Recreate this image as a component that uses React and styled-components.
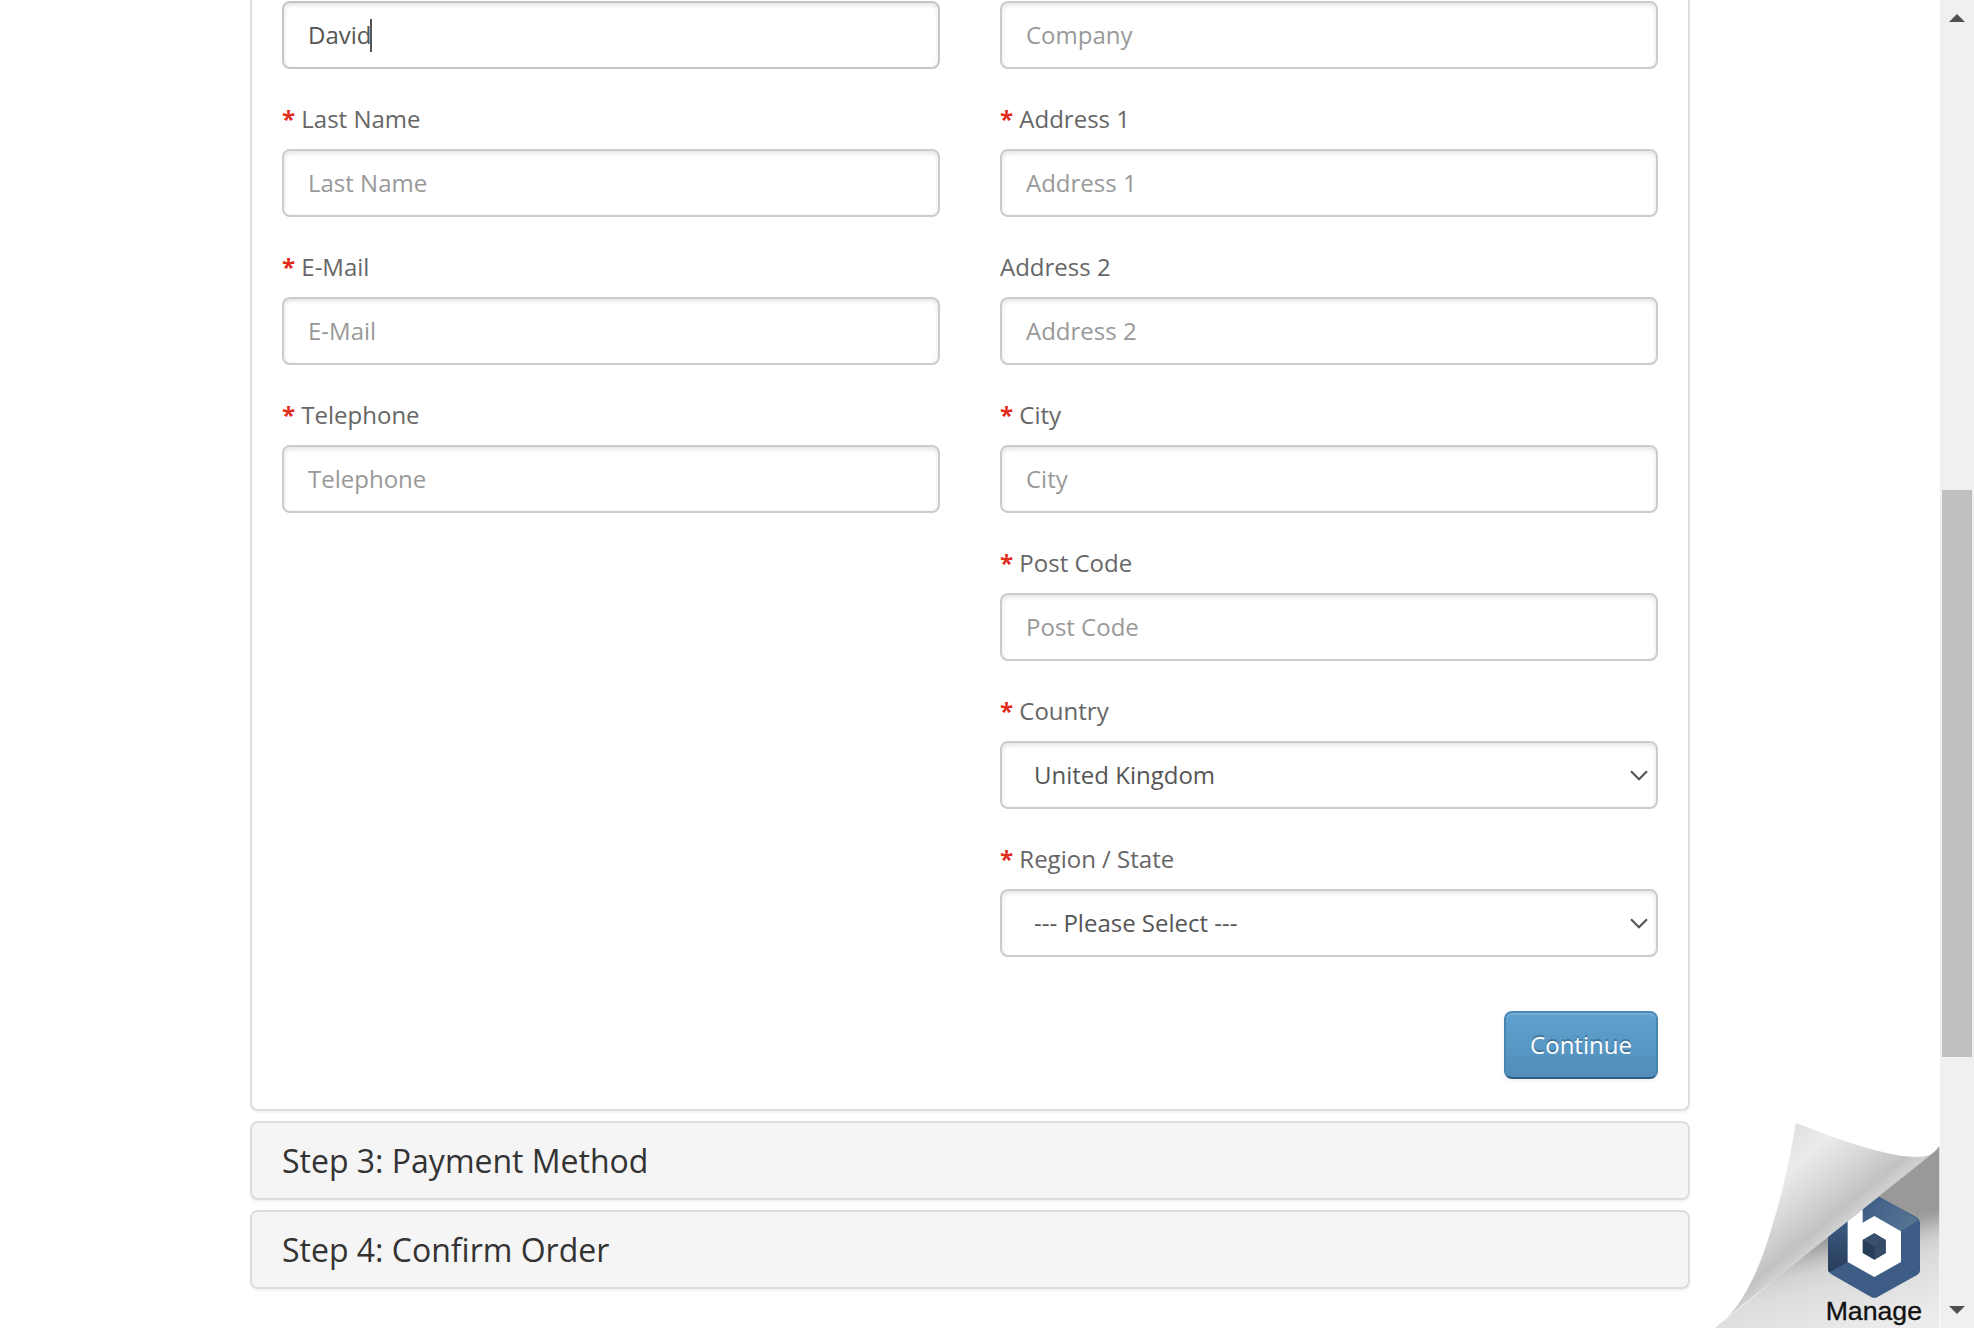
import React from "react";
import styled, { createGlobalStyle } from "styled-components";

const GlobalStyle = createGlobalStyle`
  * { box-sizing: border-box; }
  html, body { margin: 0; padding: 0; background: #fff; overflow: hidden; }
  body, input, button { font-family: "Open Sans", "Noto Sans", sans-serif; }
`;

const Window = styled.div`
  position: relative;
  display: flex;
  width: 1974px;
  height: 1328px;
  overflow: hidden;
  background: #fff;
`;

const Page = styled.main`
  flex: 1;
  display: flex;
  flex-direction: column;
  align-items: center;
  gap: 10px;
`;

const Panel = styled.section`
  width: 1440px;
  flex: none;
  border: 2px solid #ddd;
  border-radius: 8px;
  box-shadow: 0 2px 2px rgba(0, 0, 0, 0.05);
  background: #fff;
`;

const OpenPanel = styled(Panel)`
  height: 1111px;
  border-top: 0;
  border-top-left-radius: 0;
  border-top-right-radius: 0;
  padding: 1px 30px 30px;
  display: flex;
  flex-direction: column;
`;

const StepPanel = styled(Panel)`
  height: 79px;
  padding: 0 30px;
  display: flex;
  align-items: center;
  background: #f5f5f5;
`;

const StepTitle = styled.h4`
  margin: 0;
  font-size: 32px;
  font-weight: 400;
  line-height: 35px;
  color: #333;
`;

const Columns = styled.div`
  display: grid;
  grid-template-columns: 658px 658px;
  column-gap: 60px;
  align-items: start;
`;

const Fieldset = styled.div`
  display: flex;
  flex-direction: column;
  gap: 30px;
`;

const Group = styled.div`
  display: flex;
  flex-direction: column;
  gap: 10px;
`;

const Label = styled.label`
  height: 40px;
  font-size: 24px;
  line-height: 40px;
  color: #666;
  white-space: pre;
`;

const Required = styled.span`
  color: #e32c1b;
  font-weight: 700;
`;

const Control = styled.div`
  display: flex;
  align-items: center;
  justify-content: space-between;
  height: 68px;
  padding: ${(p) => (p.$select ? "0 7px 0 32px" : "0 24px")};
  border: 2px solid ${(p) => (p.$focused ? "#c1c8cc" : "#ccc")};
  border-radius: 8px;
  background: #fff;
  box-shadow: inset 0 2px 4px rgba(0, 0, 0, 0.12);
  font-size: 24px;
  line-height: 40px;
  color: #555;
`;

const TextInput = styled.input`
  width: 100%;
  height: 38px;
  margin: 0 0 2px;
  border: 0;
  padding: 0;
  outline: 0;
  background: transparent;
  font-size: 24px;
  color: #555;
  &::placeholder { color: #999; opacity: 1; }
`;

const Typed = styled.span`
  display: inline-flex;
  align-items: center;
`;

const Caret = styled.span`
  width: 2px;
  height: 33px;
  margin-left: -1px;
  background: #555;
`;

const Actions = styled.div`
  display: flex;
  justify-content: flex-end;
  margin-top: auto;
`;

const Button = styled.button`
  width: 154px;
  height: 68px;
  padding: 0;
  border: 2px solid;
  border-color: #4c8ab5 #4886b0 #2f5f80;
  border-radius: 8px;
  background: linear-gradient(#5ea1cf, #528eb9);
  box-shadow: inset 0 2px 0 rgba(255, 255, 255, 0.15), 0 2px 4px rgba(0, 0, 0, 0.06);
  color: #fff;
  font-size: 24px;
  line-height: 40px;
  text-shadow: 0 -2px 0 rgba(0, 0, 0, 0.25);
`;

const Scrollbar = styled.aside`
  width: 34px;
  height: 1328px;
  padding: 14px 2px;
  display: flex;
  flex-direction: column;
  align-items: center;
  background: #f0f0f0;
`;

const Thumb = styled.div`
  width: 30px;
  height: 567px;
  margin-top: 468px;
  margin-bottom: auto;
  background: #c0c0c0;
`;

const ManageCurl = styled.svg`
  position: absolute;
  right: 34px;
  bottom: 0;
`;

const Chevron = () => (
  <svg width="20" height="20" viewBox="0 0 20 20" fill="none">
    <path d="M2 6.2 10 14.2 18 6.2" stroke="#555" strokeWidth="2.2" />
  </svg>
);

const Arrow = ({ down }) => (
  <svg width="16" height="8" viewBox="0 0 16 8">
    <path d={down ? "M0 0H16L8 8Z" : "M0 8H16L8 0Z"} fill="#505050" />
  </svg>
);

const Field = ({ label, required, placeholder, value, typed }) => (
  <Group>
    {label && (
      <Label>
        {required && <Required>* </Required>}
        {label}
      </Label>
    )}
    {value ? (
      <Control $select>
        <span>{value}</span>
        <Chevron />
      </Control>
    ) : typed ? (
      <Control $focused>
        <Typed>
          {typed}
          <Caret />
        </Typed>
      </Control>
    ) : (
      <Control>
        <TextInput placeholder={placeholder} />
      </Control>
    )}
  </Group>
);

const Curl = () => (
  <ManageCurl width="260" height="228" viewBox="0 0 780 684">
    <defs>
      <linearGradient id="under" gradientUnits="userSpaceOnUse" x1="600" y1="300" x2="695" y2="667">
        <stop offset="0" stopColor="#999" />
        <stop offset="0.19" stopColor="#9a9a9a" />
        <stop offset="0.25" stopColor="#a8a8a8" />
        <stop offset="0.32" stopColor="#bebebe" />
        <stop offset="0.42" stopColor="#d2d2d2" />
        <stop offset="0.55" stopColor="#dcdcdc" />
        <stop offset="1" stopColor="#ececec" />
      </linearGradient>
      <linearGradient id="fold" gradientUnits="userSpaceOnUse" x1="310" y1="130" x2="510" y2="375">
        <stop offset="0" stopColor="#e2e2e2" />
        <stop offset="0.22" stopColor="#ebebeb" />
        <stop offset="0.5" stopColor="#dadada" />
        <stop offset="0.84" stopColor="#c2c2c2" />
        <stop offset="0.94" stopColor="#d0d0d0" />
        <stop offset="1" stopColor="#c6c6c6" />
      </linearGradient>
      <linearGradient id="left" x1="0" y1="0" x2="0" y2="1">
        <stop offset="0" stopColor="#3c5b82" />
        <stop offset="1" stopColor="#263c58" />
      </linearGradient>
      <linearGradient id="top" x1="0" y1="0" x2="1" y2="0.5">
        <stop offset="0" stopColor="#3b5b85" />
        <stop offset="1" stopColor="#567493" />
      </linearGradient>
    </defs>
    <path d="M778 138Q765 157 745 168L290 534Q180 625 105 684H778Z" fill="url(#under)" />
    <path d="M597 290 710 352Q720 358 720 370V512Q720 520 711 525L594 590Q583 597 572 590L454 523Q444 517 444 506V410Z" fill="#3d5d86" />
    <path d="M444 410 503 363V486L448 517Q444 513 444 506Z" fill="url(#left)" />
    <path d="M597 290 717 359 663 394 583 348 548 368V328Z" fill="url(#top)" />
    <path d="M503 363 548 328V368L583 348 663 394V486L583 531 503 486Z" fill="#fff" />
    <path d="M583 400 617 420V459L583 479 548 459V420Z" fill="#263d5a" />
    <path d="M583 400 617 420 583 440 548 420Z" fill="#38506d" />
    <path d="M583 440 617 420V459L583 479Z" fill="#364b66" />
    <path d="M348 68Q500 130 608 156Q700 180 752 165L290 534Q180 620 105 684Q205 615 270 400Q315 260 348 68Z" fill="url(#fold)" />
    <text x="437" y="660" fontFamily="Liberation Sans, Arial, sans-serif" fontSize="80" stroke="#111" strokeWidth="1" fill="#111">Manage</text>
  </ManageCurl>
);

export default function App() {
  return (
    <>
      <GlobalStyle />
      <Window>
        <Page>
          <OpenPanel>
            <Columns>
              <Fieldset>
                <Field typed="David" />
                <Field label="Last Name" required placeholder="Last Name" />
                <Field label="E-Mail" required placeholder="E-Mail" />
                <Field label="Telephone" required placeholder="Telephone" />
              </Fieldset>
              <Fieldset>
                <Field placeholder="Company" />
                <Field label="Address 1" required placeholder="Address 1" />
                <Field label="Address 2" placeholder="Address 2" />
                <Field label="City" required placeholder="City" />
                <Field label="Post Code" required placeholder="Post Code" />
                <Field label="Country" required value="United Kingdom" />
                <Field label="Region / State" required value="--- Please Select ---" />
              </Fieldset>
            </Columns>
            <Actions>
              <Button>Continue</Button>
            </Actions>
          </OpenPanel>
          <StepPanel>
            <StepTitle>Step 3: Payment Method</StepTitle>
          </StepPanel>
          <StepPanel>
            <StepTitle>Step 4: Confirm Order</StepTitle>
          </StepPanel>
        </Page>
        <Scrollbar>
          <Arrow />
          <Thumb />
          <Arrow down />
        </Scrollbar>
        <Curl />
      </Window>
    </>
  );
}
